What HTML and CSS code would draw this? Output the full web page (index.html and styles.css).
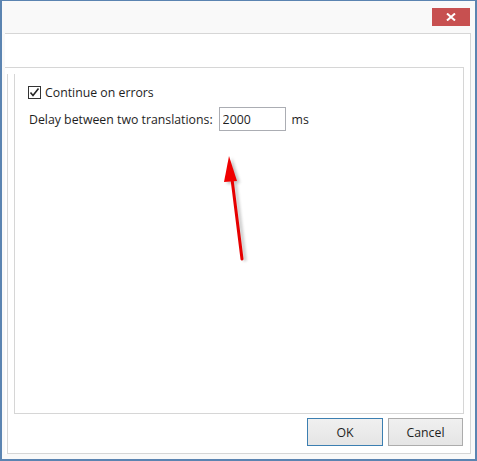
FILE: index.html
```html
<!DOCTYPE html>
<html lang="en">
<head>
  <meta charset="UTF-8" />
  <title>Options</title>
  <link rel="stylesheet" href="styles.css">
</head>
<body>
  <div class="window">
    <div class="titlebar">
      <button class="close" title="Close">
        <svg width="10" height="8" viewBox="0 0 10 8"><path d="M1 0.5 L9 7.5 M9 0.5 L1 7.5" stroke="#fff" stroke-width="2"/></svg>
      </button>
    </div>
    <div class="tabpage">
      <div class="tabhead"></div>
      <div class="group">
        <label class="check">
          <input type="checkbox" checked>
          <span class="box">
            <svg width="11" height="11" viewBox="0 0 11 11"><path d="M1.5 5.5 L4 8.5 L9.5 1.5" fill="none" stroke="#262626" stroke-width="1.6"/></svg>
          </span>
          <span>Continue on errors</span>
        </label>
        <div class="row">
          <span>Delay between two translations:</span>
          <input type="text" class="delay" value="2000">
          <span class="unit">ms</span>
        </div>
      </div>
      <div class="buttons">
        <button class="btn default">OK</button>
        <button class="btn">Cancel</button>
      </div>
    </div>
    <svg class="arrow" width="40" height="120" viewBox="0 0 40 120">
      <defs>
        <filter id="sh" x="-50%" y="-20%" width="200%" height="140%">
          <feGaussianBlur stdDeviation="1.5"/>
        </filter>
      </defs>
      <g transform="translate(3,2)" opacity="0.35" filter="url(#sh)">
        <path d="M22 110 L12 30" stroke="#555" stroke-width="3"/>
        <path d="M9 7 L4 33 L17 32 Z" fill="#555"/>
      </g>
      <path d="M22 110 L12 30" stroke="#e60000" stroke-width="3" stroke-linecap="round"/>
      <path d="M9 7 L4 33 L17 32 Z" fill="#f00000"/>
    </svg>
  </div>
</body>
</html>
```

FILE: styles.css
```css
body {
  margin: 0;
  font-family: "Open Sans", "Noto Sans", sans-serif;
  font-size: 12.3px;
  color: #1e1e1e;
}
.window {
  position: relative;
  width: 477px;
  height: 461px;
  box-sizing: border-box;
  background: #f9f9f9;
  border: 2px solid #5b84b1;
  border-top-width: 1px;
  display: flex;
  flex-direction: column;
}
.titlebar {
  height: 32px;
  display: flex;
  justify-content: flex-end;
  align-items: flex-start;
}
.close {
  margin-top: 7px;
  margin-right: 5px;
  width: 38px;
  height: 18px;
  padding: 0;
  border: 0;
  background: #c75050;
  display: flex;
  align-items: center;
  justify-content: center;
}
.tabpage {
  position: relative;
  margin: 0 4px 0 3px;
  height: 421px;
  box-sizing: border-box;
  background: #fff;
  border-top: 1px solid #d6d6d6;
  border-right: 1px solid #d6d6d6;
}
.tabpage::before {
  content: "";
  position: absolute;
  left: 2px;
  right: 0;
  top: 40px;
  bottom: 0;
  border-left: 1px solid #d6d6d6;
  border-bottom: 1px solid #d6d6d6;
}
.tabhead {
  height: 33px;
}
.group {
  position: relative;
  margin-right: 6px;
  height: 347px;
  box-sizing: border-box;
  border-top: 1px solid #d6d6d6;
  border-right: 1px solid #d6d6d6;
  padding: 16px 0 0 23px;
}
.group::before {
  content: "";
  position: absolute;
  left: 9px;
  right: 0;
  top: 6px;
  bottom: 0;
  border-left: 1px solid #d6d6d6;
  border-bottom: 1px solid #d6d6d6;
}
.check {
  display: flex;
  align-items: center;
  gap: 4px;
  height: 16px;
}
.check input {
  display: none;
}
.box {
  width: 13px;
  height: 13px;
  box-sizing: border-box;
  border: 1px solid #333;
  background: #fff;
  display: flex;
  align-items: center;
  justify-content: center;
}
.row {
  display: flex;
  align-items: center;
  margin-top: 7px;
  margin-left: 1px;
}
.delay {
  margin-left: 6px;
  width: 67px;
  height: 24px;
  box-sizing: border-box;
  border: 1px solid #abadb3;
  padding: 0 3px;
  font: inherit;
  color: #1e1e1e;
}
.unit {
  margin-left: 6px;
}
.buttons {
  display: flex;
  justify-content: flex-end;
  gap: 5px;
  margin: 4px 7px 0 0;
}
.btn {
  width: 75px;
  height: 28px;
  padding: 0;
  font: inherit;
  color: #1e1e1e;
  background: linear-gradient(#f0f0f0, #e5e5e5);
  border: 1px solid #acacac;
}
.btn.default {
  width: 76px;
  border-color: #3c7fb1;
}
.arrow {
  position: absolute;
  left: 218px;
  top: 148px;
}
```
